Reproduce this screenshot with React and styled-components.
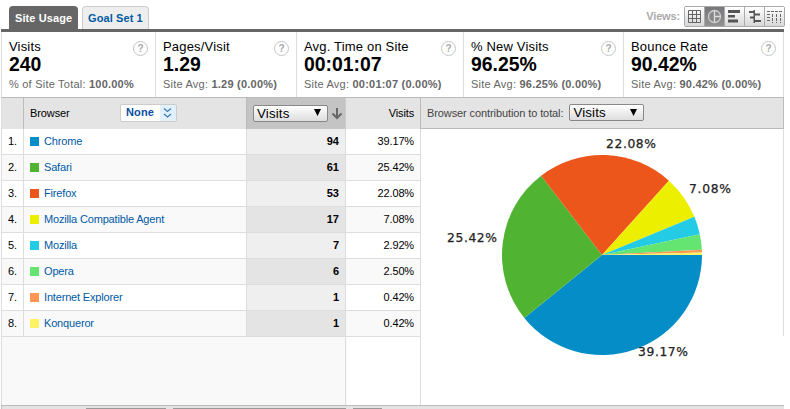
import React from 'react';
import styled, { createGlobalStyle } from 'styled-components';

const Global = createGlobalStyle`
  * { box-sizing: border-box; }
  body { margin: 0; background: #fff; overflow: hidden; font: 11px/14px "Liberation Sans", Arial, sans-serif; color: #000; }
`;
const Page = styled.main`width: 790px; height: 409px; padding-left: 1px; overflow: hidden;`;
const TopBar = styled.header`
  width: 783px; height: 32px; padding: 6px 0 0 8px; display: flex; align-items: flex-start;
  border-bottom: 3px solid #666;
`;
const Tab = styled.div`
  height: 23px; width: ${p => p.$w}px; margin-right: 4px; padding: 5px 0 0 ${p => p.$active ? 6 : 5}px;
  border: 1px solid ${p => p.$active ? '#666' : '#ccc'}; border-width: ${p => p.$active ? 0 : '1px 1px 0'};
  padding-top: ${p => p.$active ? 5 : 4}px;
  border-radius: 4px 4px 0 0; background: ${p => p.$active ? '#666' : '#eee'};
  color: ${p => p.$active ? '#fff' : '#0059a5'}; font-weight: bold; white-space: nowrap; letter-spacing: .1px;
`;
const Views = styled.div`margin-left: auto; display: flex; color: #aaa; font-weight: bold; line-height: 20px; gap: 4px; margin-right: -1px; letter-spacing: -.15px;`;
const ViewGroup = styled.div`display: flex; width: 101px; height: 21px; border: 1px solid #aaa; border-radius: 2px;`;
const ViewButton = styled.div`
  flex: 1; height: 19px; display: flex; align-items: center; justify-content: center;
  border-left: ${p => p.$first ? 0 : '1px solid #aaa'};
  background: ${p => p.$active ? 'linear-gradient(#77777b, #929292)' : 'linear-gradient(#fff, #d8d8d8)'};
`;
const Metrics = styled.section`display: flex; width: 783px; height: 65px; border-left: 1px solid #ddd;`;
const Metric = styled.div`
  width: ${p => p.$w}px; flex: none; border-right: 1px solid #ddd; padding: 7px 7px 0; position: relative; white-space: nowrap;
`;
const MetricName = styled.div`font-size: 13px; line-height: 16px; letter-spacing: .18px;`;
const MetricValue = styled.div`font-size: 20px; font-weight: bold; line-height: 18px; height: 20px; transform: scaleX(.97); transform-origin: left;`;
const MetricNote = styled.div`color: #666; margin-top: 2px; line-height: 14px; letter-spacing: .22px;`;
const Help = styled.div`
  position: absolute; right: 7px; top: 9px; width: 15px; height: 15px; border: 1px solid #c4c4c4; border-radius: 50%;
  color: #aaa; font-size: 10px; font-weight: bold; line-height: 13px; text-align: center;
`;
const Body = styled.section`display: flex; width: 783px; height: 309px; border-top: 1px solid #bbb; border-bottom: 1px solid #bbb;`;
const Table = styled.div`width: 420px; height: 307px; background: linear-gradient(to right, #f9f9f9 345px, #fff 345px);
  display: flex; flex-direction: column; border-left: 1px solid #ddd;`;
const Row = styled.div`
  display: grid; grid-template-columns: 22px 223px 99px 75px; height: ${p => p.$head ? 31 : 26}px; flex: none;
  line-height: ${p => p.$head ? 31 : 25}px;
  background: ${p => p.$head ? '#e4e4e4' : p.$even ? '#f9f9f9' : '#fff'};
  & > div { border-right: 1px solid ${p => p.$head ? '#bbb' : '#ddd'}; border-bottom: 1px solid ${p => p.$head ? '#bbb' : '#ddd'}; }
`;
const Rank = styled.div`padding-left: 6px; letter-spacing: -.2px;`;
const Name = styled.div`display: flex; align-items: center; padding-left: 6px; color: ${p => p.$plain ? '#000' : '#0059a5'}; letter-spacing: ${p => p.$plain ? '-.1px' : '-.17px'};`;
const Swatch = styled.i`width: 9px; height: 9px; margin-right: 5px; background: ${p => p.$color};`;
const Count = styled.div`font-weight: bold; text-align: right; padding-right: 6px; background: ${p => p.$even ? '#e4e4e4' : '#efefef'};`;
const SortCell = styled.div`background: #c4c4c4; display: flex; align-items: center; padding: 0 0 1px 6px; gap: 3px; && { border-right-color: #ccc; }`;
const Share = styled.div`text-align: right; padding-right: 6px; letter-spacing: -.15px;`;
const Filler = styled.div`flex: 1; width: 419px; display: flex; border-right: 1px solid #ddd;`;
const FillerEdge = styled.div`width: 344px; border-right: 1px solid #ddd;`;
const None = styled.div`
  width: 57px; height: 18px; margin: -1px 69px 0 auto; padding-left: 5px; border: 1px solid #ccc; border-radius: 2px;
  background: #fff; color: #0b4da2; font-weight: bold; line-height: 15px; display: flex; justify-content: space-between; letter-spacing: .15px;
`;
const NoneArrow = styled.div`width: 16px; height: 16px; background: #e2f0fb; display: flex;`;
const Select = styled.div`
  width: 75px; height: 17px; border: 1px solid #888; border-radius: 2px; background: linear-gradient(#fff, #ddd);
  color: #000; font-size: 13.3px; line-height: 15px; padding: 0 6px 0 3px; display: flex; justify-content: space-between; align-items: center;
  letter-spacing: .15px;
`;
const ChartPane = styled.div`width: 363px; height: 307px;`;
const ChartHead = styled.div`
  height: 31px; border-bottom: 1px solid #bbb; border-right: 1px solid #bbb; background: #e4e4e4; color: #444;
  display: flex; align-items: center; padding: 0 0 1px 6px; gap: 6px; white-space: nowrap; letter-spacing: -.1px;
`;
const ChartArea = styled.div`height: 207px; border-right: 1px solid #ddd; svg { display: block; overflow: visible; }`;
const Footer = styled.footer`width: 783px; height: 3px; background: #e4e4e4; padding: 2px 0 0 84px; display: flex; border-left: 1px solid #bbb;`;
const FooterEdge = styled.div`width: ${p => p.$w}px; height: 1px; background: #999; margin-right: ${p => p.$gap}px;`;

const metrics = [
  ['Visits', '240', '% of Site Total:', '100.00%', 154],
  ['Pages/Visit', '1.29', 'Site Avg:', '1.29 (0.00%)', 141],
  ['Avg. Time on Site', '00:01:07', 'Site Avg:', '00:01:07 (0.00%)', 167],
  ['% New Visits', '96.25%', 'Site Avg:', '96.25% (0.00%)', 160],
  ['Bounce Rate', '90.42%', 'Site Avg:', '90.42% (0.00%)', 160],
];
const browsers = [
  ['Chrome', 94, '39.17%', '#058dc7'], ['Safari', 61, '25.42%', '#50b432'],
  ['Firefox', 53, '22.08%', '#ed561b'], ['Mozilla Compatible Agent', 17, '7.08%', '#edef00'],
  ['Mozilla', 7, '2.92%', '#24cbe5'], ['Opera', 6, '2.50%', '#64e572'],
  ['Internet Explorer', 1, '0.42%', '#ff9655'], ['Konqueror', 1, '0.42%', '#fff263'],
];
const labels = [['22.08%', 185, 19], ['7.08%', 268, 64], ['25.42%', 26, 113], ['39.17%', 217, 227]];

const Dropdown = () => (
  <Select>Visits<svg width="7" height="8"><path d="M0 0h7L3.5 7z" fill="#000" /></svg></Select>
);

const icons = [
  <path d="M1.5 1.5h12v12h-12zM5.5 1v13M9.5 1v13M1 5.5h13M1 9.5h13" stroke="#666" fill="none" />,
  <><circle cx="7.5" cy="7.5" r="6" fill="#888" stroke="#ccc" strokeWidth="1.3" /><path d="M7.5 1.5v12M7.5 7.5h6" stroke="#ddd" strokeWidth="1.3" /></>,
  <path d="M1 1h12v3H1zM1 6h7v2.5H1zM1 10.5h10v3H1z" fill="#555" />,
  <path d="M6.5 1H8v13H6.5zM2 2h5v2H2zM8 4.5h5v2H8zM3 7.5h4v2H3zM8 11h6v2H8z" fill="#555" />,
  <path d="M0 2.5h15M0 5.5h4M0 8.5h4M0 11.5h4M5.5 5v9M9.5 5v9M13.5 5v9" stroke="#666" strokeDasharray="3 1" fill="none" />,
];

function Pie() {
  let angle = 0;
  return (
    <svg width="362" height="240" fontFamily="DejaVu Sans, sans-serif" fontSize="12.3">
      {browsers.map(([name, n, , color]) => {
        const a = angle;
        angle += n / 240 * Math.PI * 2;
        const pt = t => `${181 + 100 * Math.cos(t)} ${126 + 100 * Math.sin(t)}`;
        return <path key={name} d={`M181 126L${pt(a)}A100 100 0 0 1 ${pt(angle)}Z`} fill={color} />;
      })}
      {labels.map(([t, x, y]) => (
        <text key={t} x={x} y={y} fill="#222" stroke="#222" strokeWidth=".25" textLength={t.length === 6 ? 50 : 42}>{t}</text>
      ))}
    </svg>
  );
}

export default function App() {
  return (
    <Page>
      <Global />
      <TopBar>
        <Tab $active $w={69}>Site Usage</Tab>
        <Tab $w={67}>Goal Set 1</Tab>
        <Views>Views:
          <ViewGroup>
            {icons.map((icon, i) => <ViewButton key={i} $first={i === 0} $active={i === 1}><svg width="15" height="15">{icon}</svg></ViewButton>)}
          </ViewGroup>
        </Views>
      </TopBar>
      <Metrics>
        {metrics.map(([name, value, note, avg, w]) => (
          <Metric key={name} $w={w}>
            <MetricName>{name}</MetricName><MetricValue>{value}</MetricValue>
            <MetricNote>{note} <b>{avg}</b></MetricNote><Help>?</Help>
          </Metric>
        ))}
      </Metrics>
      <Body>
        <Table>
          <Row $head>
            <Rank />
            <Name $plain>Browser
              <None>None<NoneArrow><svg width="16" height="16"><path d="M4 3.5l3.5 3 3.5-3M4 9l3.5 3L11 9" fill="none" stroke="#3978bb" strokeWidth="1.2" /></svg></NoneArrow></None>
            </Name>
            <SortCell><Dropdown /><svg width="12" height="13"><path d="M6 1v10M1.5 6.5L6 11l4.5-4.5" fill="none" stroke="#666" strokeWidth="2" /></svg></SortCell>
            <Share>Visits</Share>
          </Row>
          {browsers.map(([name, n, share, color], i) => (
            <Row key={name} $even={i % 2}>
              <Rank>{i + 1}.</Rank><Name><Swatch $color={color} />{name}</Name>
              <Count $even={i % 2}>{n}</Count><Share>{share}</Share>
            </Row>
          ))}
          <Filler><FillerEdge /></Filler>
        </Table>
        <ChartPane>
          <ChartHead>Browser contribution to total:<Dropdown /></ChartHead>
          <ChartArea><Pie /></ChartArea>
        </ChartPane>
      </Body>
      <Footer><FooterEdge $w={80} $gap={7} /><FooterEdge $w={173} $gap={7} /><FooterEdge $w={29} $gap={0} /></Footer>
    </Page>
  );
}
